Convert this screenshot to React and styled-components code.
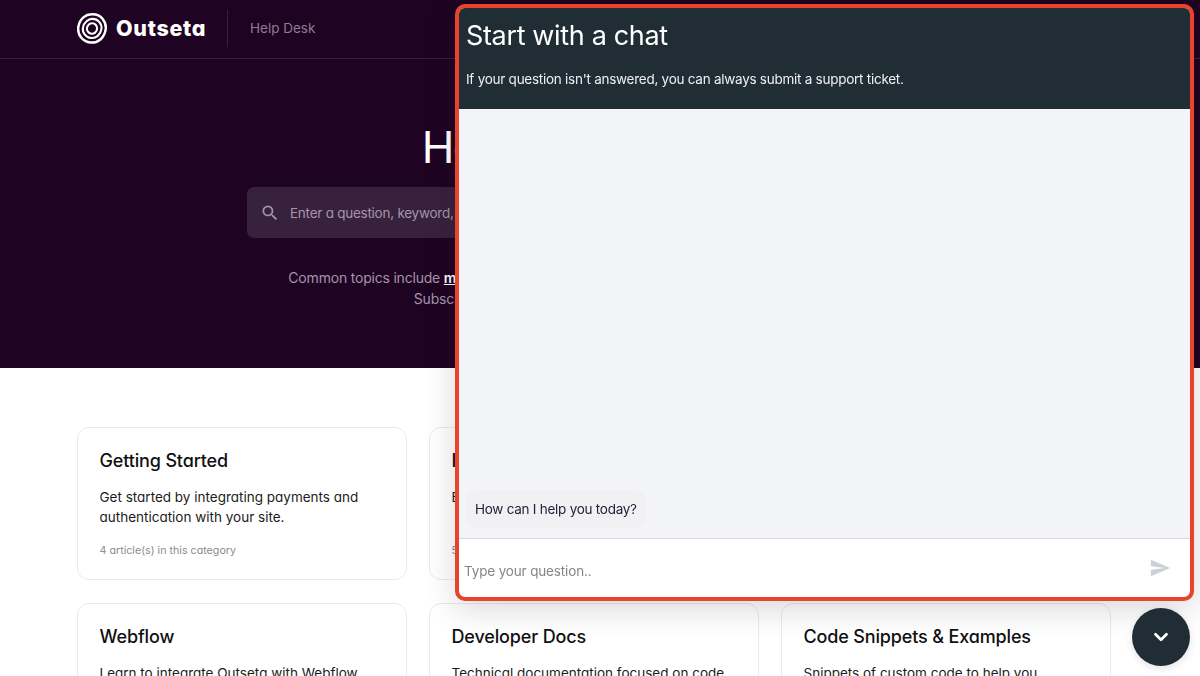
import React from 'react';
import styled, { createGlobalStyle } from 'styled-components';
import { MdSearch, MdSend } from 'react-icons/md';
import { ChevronDown } from 'lucide-react';

const CARDS = [
  { title: 'Getting Started', text: 'Get started by integrating payments and authentication with your site.', count: '4 article(s) in this category' },
  { title: 'Integrations', text: 'Explore how Outseta connects with tools.', count: '5 article(s) in this category' },
  { title: 'Memberships', text: 'Set up plans, add-ons and protected content for members.', count: '6 article(s) in this category' },
  { title: 'Webflow', text: 'Learn to integrate Outseta with Webflow websites and apps.', count: '3 article(s) in this category' },
  { title: 'Developer Docs', text: 'Technical documentation focused on code and custom builds.', count: '7 article(s) in this category' },
  { title: 'Code Snippets & Examples', text: 'Snippets of custom code to help you customize your site.', count: '8 article(s) in this category' },
];

function App() {
  return (
    <>
      <GlobalStyle />
      <Page>
        <Hero>
          <TopBar>
            <Logo>
              <svg width="30" height="31" viewBox="0 0 30 31" fill="none" stroke="#fff">
                <path d="M14.500 1.300c4.500-.3 8.400 1.200 11 4.400 2.700 3.200 3.700 6.700 3.200 10.500-.5 3.900-2 7.300-5 10-3 2.700-6.500 3.700-10.200 3.300-3.800-.4-7.100-2.200-9.600-5.300C1.400 21 .7 17.400 1.400 13.600 2 9.800 3.800 6.500 6.700 4.100 9 2.200 11.500 1.400 14.500 1.300z" strokeWidth="2.500" />
                <path d="M14.800 5.900c3-.2 5.700.9 7.400 3 1.900 2.200 2.600 4.600 2.200 7.200-.4 2.700-1.500 5-3.600 6.800-2 1.700-4.300 2.400-6.800 2.100-2.600-.3-4.800-1.600-6.400-3.700-1.500-1.900-2.100-4.300-1.600-6.900.4-2.500 1.700-4.600 3.600-6.200 1.600-1.300 3.200-2.200 5.200-2.300z" strokeWidth="2.100" />
                <path d="M15 10.300c1.500-.1 2.900.5 3.900 1.700 1.100 1.200 1.400 2.500 1.200 3.900-.2 1.500-.9 2.800-2 3.700-1.100.9-2.400 1.300-3.800 1.100-1.400-.2-2.600-.9-3.400-2-.9-1.100-1.200-2.300-1-3.600.2-1.400.9-2.600 2-3.600.9-.8 2-1.200 3.100-1.200z" strokeWidth="2.100" />
              </svg>
              <Wordmark>Outseta</Wordmark>
            </Logo>
            <BarLabel>Help Desk</BarLabel>
          </TopBar>
          <HeroBody>
            <HeroTitle>How can we help?</HeroTitle>
            <SearchBox>
              <MdSearch size={20} />
              <span>Enter a question, keyword, or topic...</span>
            </SearchBox>
            <Topics>
              Common topics include <u>memberships</u>, <u>payments</u>, <u>CRM</u>, <u>email</u>, <u>help desk</u> and <u>customer support</u><br />
              Subscription management for your whole team and more.
            </Topics>
          </HeroBody>
        </Hero>
        <CardGrid>
          {CARDS.map((card) => (
            <Card key={card.title}>
              <CardTitle>{card.title}</CardTitle>
              <CardText>{card.text}</CardText>
              <CardCount>{card.count}</CardCount>
            </Card>
          ))}
        </CardGrid>
      </Page>

      <ChatPanel>
        <ChatHeader>
          <ChatTitle>Start with a chat</ChatTitle>
          <ChatIntro>If your question isn't answered, you can always submit a support ticket.</ChatIntro>
        </ChatHeader>
        <ChatMessages>
          <Bubble>How can I help you today?</Bubble>
        </ChatMessages>
        <ChatInputRow>
          <ChatPlaceholder>Type your question..</ChatPlaceholder>
          <SendIcon size={22} />
        </ChatInputRow>
      </ChatPanel>
      <ChatToggle>
        <ChevronDown size={22} strokeWidth={3} color="#fff" />
      </ChatToggle>
    </>
  );
}

export default App;

const GlobalStyle = createGlobalStyle`
  html, body {
    margin: 0;
    height: 676px;
    overflow: hidden;
    background: #fff;
    font-family: Inter, "Liberation Sans", sans-serif;
  }
  * {
    box-sizing: border-box;
  }
`;

const Page = styled.div`
  width: 1200px;
  font-feature-settings: 'cv11';
`;

const Hero = styled.section`
  height: 368px;
  background: #1f0322;
`;

const TopBar = styled.header`
  height: 59px;
  padding: 0 0 2px 77px;
  display: flex;
  align-items: center;
  border-bottom: 1px solid #38203b;
`;

const Logo = styled.div`
  display: flex;
  align-items: center;
  gap: 9px;
  width: 151px;
  height: 37px;
  border-right: 1px solid #38203b;
`;

const Wordmark = styled.span`
  font-weight: 800;
  font-size: 21.5px;
  letter-spacing: 0.7px;
  color: #fff;
`;

const BarLabel = styled.span`
  margin-left: 22px;
  font-size: 13.5px;
  color: #8f7b93;
`;

const HeroBody = styled.div`
  display: flex;
  flex-direction: column;
  align-items: center;
  padding-top: 59px;
`;

const HeroTitle = styled.h1`
  margin: 0;
  font-size: 44px;
  line-height: 58px;
  font-weight: 400;
  letter-spacing: -1.6px;
  color: #fff;
`;

const SearchBox = styled.div`
  margin-top: 11px;
  width: 706px;
  height: 51px;
  padding-left: 13px;
  display: flex;
  align-items: center;
  gap: 10px;
  border-radius: 7px;
  background: #38213d;
  font-size: 13.5px;
  letter-spacing: -0.25px;
  color: #a594a9;
`;

const Topics = styled.p`
  margin: 29px 0 0;
  font-size: 14px;
  line-height: 21px;
  letter-spacing: -0.2px;
  text-align: center;
  color: #a594a9;

  u {
    color: #fff;
    font-weight: 600;
  }
`;

const CardGrid = styled.main`
  padding: 59px 89px 0 77px;
  display: grid;
  grid-template-columns: repeat(3, 330px);
  column-gap: 22px;
  row-gap: 23px;
`;

const Card = styled.article`
  height: 153px;
  padding: 21px 21.5px 0;
  border: 1px solid #ebebed;
  border-radius: 12px;
  background: #fff;
`;

const CardTitle = styled.h3`
  margin: 0;
  font-size: 18px;
  line-height: 24px;
  font-weight: 500;
  letter-spacing: -0.15px;
  color: #111113;
`;

const CardText = styled.p`
  margin: 14px 0 0;
  min-height: 40px;
  font-size: 13.5px;
  line-height: 20px;
  color: #1c1c20;
`;

const CardCount = styled.div`
  margin-top: 17px;
  font-size: 10.7px;
  line-height: 14px;
  color: #8b8b90;
`;

const ChatPanel = styled.aside`
  position: fixed;
  left: 455px;
  top: 4px;
  width: 739px;
  height: 597px;
  display: flex;
  flex-direction: column;
  border: 4px solid #e8442a;
  border-radius: 10px;
  overflow: hidden;
  background: #fff;
  box-shadow: 0 8px 32px rgba(20, 20, 40, 0.16);
`;

const ChatHeader = styled.div`
  height: 101px;
  padding: 12px 7px 0;
  background: #202d35;
  color: #fff;
`;

const ChatTitle = styled.h2`
  margin: 0;
  font-size: 27px;
  line-height: 32px;
  font-weight: 400;
  letter-spacing: -0.35px;
`;

const ChatIntro = styled.p`
  margin: 17px 0 0;
  font-size: 13.5px;
  line-height: 20px;
  letter-spacing: -0.26px;
  color: #eef0f2;
`;

const ChatMessages = styled.div`
  flex: 1;
  padding: 0 7px 10px;
  display: flex;
  align-items: flex-end;
  background: #f3f4f8;
  border-bottom: 1px solid #d8d9e2;
`;

const Bubble = styled.div`
  padding: 9px;
  border-radius: 12px;
  background: #f1f1f4;
  font-size: 13.5px;
  line-height: 20px;
  letter-spacing: -0.26px;
  color: #23233a;
`;

const ChatInputRow = styled.div`
  height: 58px;
  padding: 6px 19px 0 5px;
  display: flex;
  align-items: center;
  justify-content: space-between;
`;

const ChatPlaceholder = styled.span`
  font-size: 13.5px;
  letter-spacing: -0.15px;
  color: #85858c;
`;

const SendIcon = styled(MdSend)`
  margin-top: -6px;
  color: #cdd0d8;
`;

const ChatToggle = styled.button`
  position: fixed;
  left: 1132px;
  top: 608px;
  width: 58px;
  height: 58px;
  padding: 0;
  display: flex;
  align-items: center;
  justify-content: center;
  border: 0;
  border-radius: 50%;
  background: #202d35;
  box-shadow: 0 2px 8px rgba(20, 20, 40, 0.12);
`;
